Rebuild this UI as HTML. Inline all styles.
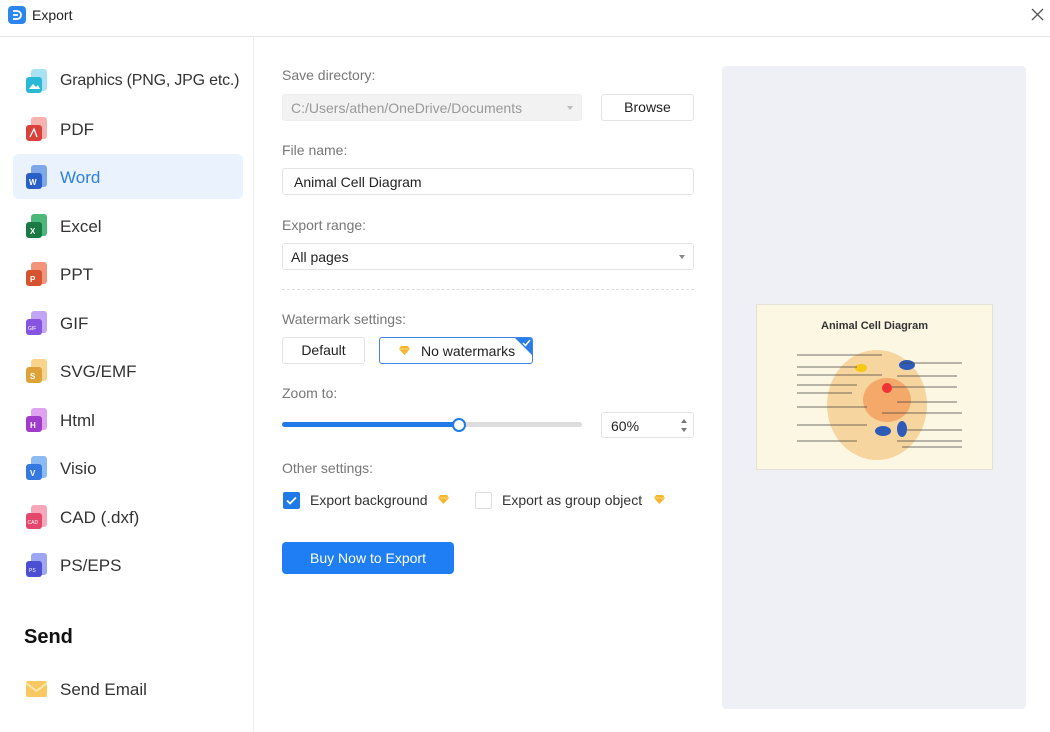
<!DOCTYPE html>
<html><head><meta charset="utf-8"><style>
*{box-sizing:border-box;margin:0;padding:0}
body{width:1050px;height:732px;background:#fff;font-family:"Liberation Sans",sans-serif;position:relative;overflow:hidden;color:#222}
.a{position:absolute}
.top{left:0;top:0;width:1050px;height:37px;border-bottom:1px solid #e6e6e6}
.side{left:253px;top:37px;width:1px;height:695px;background:#ececec}
.item{position:absolute;left:13px;width:230px;height:45px;border-radius:6px;font-size:17px;color:#333}
.item span{position:absolute;left:47px;top:14px;white-space:nowrap}
.item svg{position:absolute;left:12px;top:11px}
.sel{background:#e9f2fd}.sel span{color:#2f7fe0}
.lbl{font-size:14px;color:#777;position:absolute;left:282px}
.box{position:absolute;border:1px solid #e3e3e3;border-radius:3px;font-size:14px;background:#fff}
.arrow{position:absolute;right:8px;top:11px;width:0;height:0;border-left:3.5px solid transparent;border-right:3.5px solid transparent;border-top:4px solid #888}
</style></head><body>
<div class="a top"></div>
<svg class="a" style="left:8px;top:6px" width="18" height="18"><rect width="18" height="18" rx="4" fill="#2b86f0"/><path d="M5 5h4a4 4 0 0 1 0 8H5M5 9h5" stroke="#fff" stroke-width="1.8" fill="none"/></svg>
<div class="a" style="left:32px;top:7px;font-size:14px;color:#222">Export</div>
<svg class="a" style="left:1031px;top:8px" width="13" height="13"><path d="M1 1L12 12M12 1L1 12" stroke="#555" stroke-width="1.3"/></svg>
<div class="a side"></div>

<div class="item" style="top:58px"><svg width="24" height="26"><rect x="6" y="0" width="16" height="22" rx="3" fill="#a9e3f3"/><rect x="1" y="8" width="16" height="16" rx="3" fill="#2bb8d6"/><path d="M4 20l4-5 3 3 2-2 2 4z" fill="#fff"/></svg><span style="font-size:16px;letter-spacing:-0.2px">Graphics (PNG, JPG etc.)</span></div>
<div class="item" style="top:106px"><svg width="24" height="26"><rect x="6" y="0" width="16" height="22" rx="3" fill="#f7b1ae"/><rect x="1" y="8" width="16" height="16" rx="3" fill="#d9423a"/><path d="M5 20l4-8 3 8" stroke="#fff" stroke-width="1.3" fill="none"/></svg><span>PDF</span></div>
<div class="item sel" style="top:154px"><svg width="24" height="26"><rect x="6" y="0" width="16" height="22" rx="3" fill="#7ea7ea"/><rect x="1" y="8" width="16" height="16" rx="3" fill="#2a5fc9"/><text x="4" y="20" font-size="8" fill="#fff" font-family="Liberation Sans" font-weight="bold">W</text></svg><span>Word</span></div>
<div class="item" style="top:203px"><svg width="24" height="26"><rect x="6" y="0" width="16" height="22" rx="3" fill="#4cb878"/><rect x="1" y="8" width="16" height="16" rx="3" fill="#1b7a43"/><text x="5" y="20" font-size="8" fill="#fff" font-family="Liberation Sans" font-weight="bold">X</text></svg><span>Excel</span></div>
<div class="item" style="top:251px"><svg width="24" height="26"><rect x="6" y="0" width="16" height="22" rx="3" fill="#f3937a"/><rect x="1" y="8" width="16" height="16" rx="3" fill="#d5532f"/><text x="5" y="20" font-size="8" fill="#fff" font-family="Liberation Sans" font-weight="bold">P</text></svg><span>PPT</span></div>
<div class="item" style="top:300px"><svg width="24" height="26"><rect x="6" y="0" width="16" height="22" rx="3" fill="#c2a5f5"/><rect x="1" y="8" width="16" height="16" rx="3" fill="#8654e0"/><text x="3" y="19" font-size="5" fill="#fff" font-family="Liberation Sans">GIF</text></svg><span>GIF</span></div>
<div class="item" style="top:348px"><svg width="24" height="26"><rect x="6" y="0" width="16" height="22" rx="3" fill="#f8d38a"/><rect x="1" y="8" width="16" height="16" rx="3" fill="#dea23a"/><text x="5" y="20" font-size="8" fill="#fff" font-family="Liberation Sans" font-weight="bold">S</text></svg><span>SVG/EMF</span></div>
<div class="item" style="top:397px"><svg width="24" height="26"><rect x="6" y="0" width="16" height="22" rx="3" fill="#dfa2ee"/><rect x="1" y="8" width="16" height="16" rx="3" fill="#a13bc9"/><text x="5" y="20" font-size="8" fill="#fff" font-family="Liberation Sans" font-weight="bold">H</text></svg><span>Html</span></div>
<div class="item" style="top:445px"><svg width="24" height="26"><rect x="6" y="0" width="16" height="22" rx="3" fill="#8cbaf5"/><rect x="1" y="8" width="16" height="16" rx="3" fill="#3478e0"/><text x="5" y="20" font-size="8" fill="#fff" font-family="Liberation Sans" font-weight="bold">V</text></svg><span>Visio</span></div>
<div class="item" style="top:494px"><svg width="24" height="26"><rect x="6" y="0" width="16" height="22" rx="3" fill="#f7a7bb"/><rect x="1" y="8" width="16" height="16" rx="3" fill="#e3476b"/><text x="2.5" y="19" font-size="5" fill="#fff" font-family="Liberation Sans">CAD</text></svg><span>CAD (.dxf)</span></div>
<div class="item" style="top:542px"><svg width="24" height="26"><rect x="6" y="0" width="16" height="22" rx="3" fill="#9ea5f2"/><rect x="1" y="8" width="16" height="16" rx="3" fill="#4b4fd0"/><text x="4" y="19" font-size="5" fill="#fff" font-family="Liberation Sans">PS</text></svg><span>PS/EPS</span></div>
<div class="a" style="left:24px;top:626px;font-size:20px;font-weight:bold;color:#111">Send</div>
<svg class="a" style="left:26px;top:681px" width="21" height="16"><rect width="21" height="16" rx="2" fill="#f9c861"/><path d="M0 2l10.5 8L21 2" stroke="#fde7b1" stroke-width="2" fill="none"/></svg>
<div class="a" style="left:60px;top:680px;font-size:17px;color:#333">Send Email</div>

<div class="lbl" style="top:67px">Save directory:</div>
<div class="box" style="left:282px;top:94px;width:300px;height:27px;background:#f2f2f2;border-color:#eee;color:#999"><span style="position:absolute;left:8px;top:5px">C:/Users/athen/OneDrive/Documents</span><div class="arrow" style="border-top-color:#bbb"></div></div>
<div class="box" style="left:601px;top:94px;width:93px;height:27px;text-align:center;line-height:25px;color:#222">Browse</div>
<div class="lbl" style="top:142px">File name:</div>
<div class="box" style="left:282px;top:168px;width:412px;height:27px"><span style="position:absolute;left:11px;top:5px">Animal Cell Diagram</span></div>
<div class="lbl" style="top:217px">Export range:</div>
<div class="box" style="left:282px;top:243px;width:412px;height:27px"><span style="position:absolute;left:8px;top:5px">All pages</span><div class="arrow"></div></div>
<div class="a" style="left:282px;top:289px;width:412px;border-top:1px dashed #ddd"></div>
<div class="lbl" style="top:311px">Watermark settings:</div>
<div class="box" style="left:282px;top:337px;width:83px;height:27px;text-align:center;line-height:25px;color:#222">Default</div>
<div class="box" style="left:379px;top:337px;width:154px;height:27px;border-color:#3a85e6;overflow:hidden"><svg style="position:absolute;left:18px;top:7px" width="13" height="11"><path d="M3 1h7l2 3-5.5 6L1 4z" fill="#f5b731"/><path d="M1 4h11" stroke="#fbd776" stroke-width="1"/></svg><span style="position:absolute;left:41px;top:5px;color:#222">No watermarks</span><svg style="position:absolute;right:0;top:0" width="17" height="17"><path d="M0 0h17v17z" fill="#2a7de8"/><path d="M8 5l2.5 2.5L15 2" stroke="#fff" stroke-width="1.5" fill="none"/></svg></div>
<div class="lbl" style="top:385px">Zoom to:</div>
<div class="a" style="left:282px;top:422px;width:300px;height:5px;border-radius:3px;background:#ddd"></div>
<div class="a" style="left:282px;top:422px;width:177px;height:5px;border-radius:3px;background:#1f7ae8"></div>
<div class="a" style="left:452px;top:418px;width:14px;height:14px;border-radius:50%;background:#fff;border:2px solid #1f7ae8"></div>
<div class="box" style="left:601px;top:412px;width:93px;height:26px"><span style="position:absolute;left:9px;top:5px">60%</span><div style="position:absolute;right:6px;top:6px;border-left:3px solid transparent;border-right:3px solid transparent;border-bottom:4px solid #777"></div><div style="position:absolute;right:6px;top:15px;border-left:3px solid transparent;border-right:3px solid transparent;border-top:4px solid #777"></div></div>
<div class="lbl" style="top:460px">Other settings:</div>
<svg class="a" style="left:283px;top:492px" width="17" height="17"><rect width="17" height="17" rx="2" fill="#1f7ae8"/><path d="M4 8.5l3 3 6-6" stroke="#fff" stroke-width="1.8" fill="none"/></svg>
<div class="a" style="left:310px;top:492px;font-size:14px;color:#333">Export background</div>
<svg class="a" style="left:437px;top:494px" width="13" height="11"><path d="M3 1h7l2 3-5.5 6L1 4z" fill="#f5b731"/><path d="M1 4h11" stroke="#fbd776" stroke-width="1"/></svg>
<div class="a" style="left:475px;top:492px;width:17px;height:17px;border:1px solid #ddd;border-radius:2px"></div>
<div class="a" style="left:502px;top:492px;font-size:14px;color:#333">Export as group object</div>
<svg class="a" style="left:653px;top:494px" width="13" height="11"><path d="M3 1h7l2 3-5.5 6L1 4z" fill="#f5b731"/><path d="M1 4h11" stroke="#fbd776" stroke-width="1"/></svg>
<div class="a" style="left:282px;top:542px;width:172px;height:32px;background:#1f7ef3;border-radius:4px;color:#fff;font-size:14px;text-align:center;line-height:32px">Buy Now to Export</div>

<div class="a" style="left:722px;top:66px;width:304px;height:643px;background:#eef0f6;border-radius:4px"></div>
<div class="a" style="left:756px;top:304px;width:237px;height:166px;background:#fcf7e3;border:1px solid #e4e2d6">
<div style="position:absolute;left:0;width:100%;top:15px;text-align:center;font-size:11px;font-weight:bold;color:#333">Animal Cell Diagram</div>
<svg style="position:absolute;left:0;top:0" width="237" height="166">
<ellipse cx="120" cy="100" rx="50" ry="55" fill="#f7d59f"/>
<ellipse cx="130" cy="95" rx="24" ry="22" fill="#f4a86a"/>
<circle cx="130" cy="83" r="5" fill="#e33"/>
<ellipse cx="104" cy="63" rx="6" ry="4" fill="#f6c915"/>
<ellipse cx="150" cy="60" rx="8" ry="5" fill="#2e5ab8"/>
<ellipse cx="126" cy="126" rx="8" ry="5" fill="#2e5ab8"/>
<ellipse cx="145" cy="124" rx="5" ry="8" fill="#2e5ab8"/>
<g stroke="#444" stroke-width="0.7">
<path d="M40 50h85M40 62h60M40 70h85M40 80h60M40 88h55M40 102h70M40 120h70M40 136h60M145 58h60M140 71h60M135 82h65M140 97h60M125 108h80M150 125h55M140 136h65M145 142h60"/>
</g></svg></div>
</body></html>
